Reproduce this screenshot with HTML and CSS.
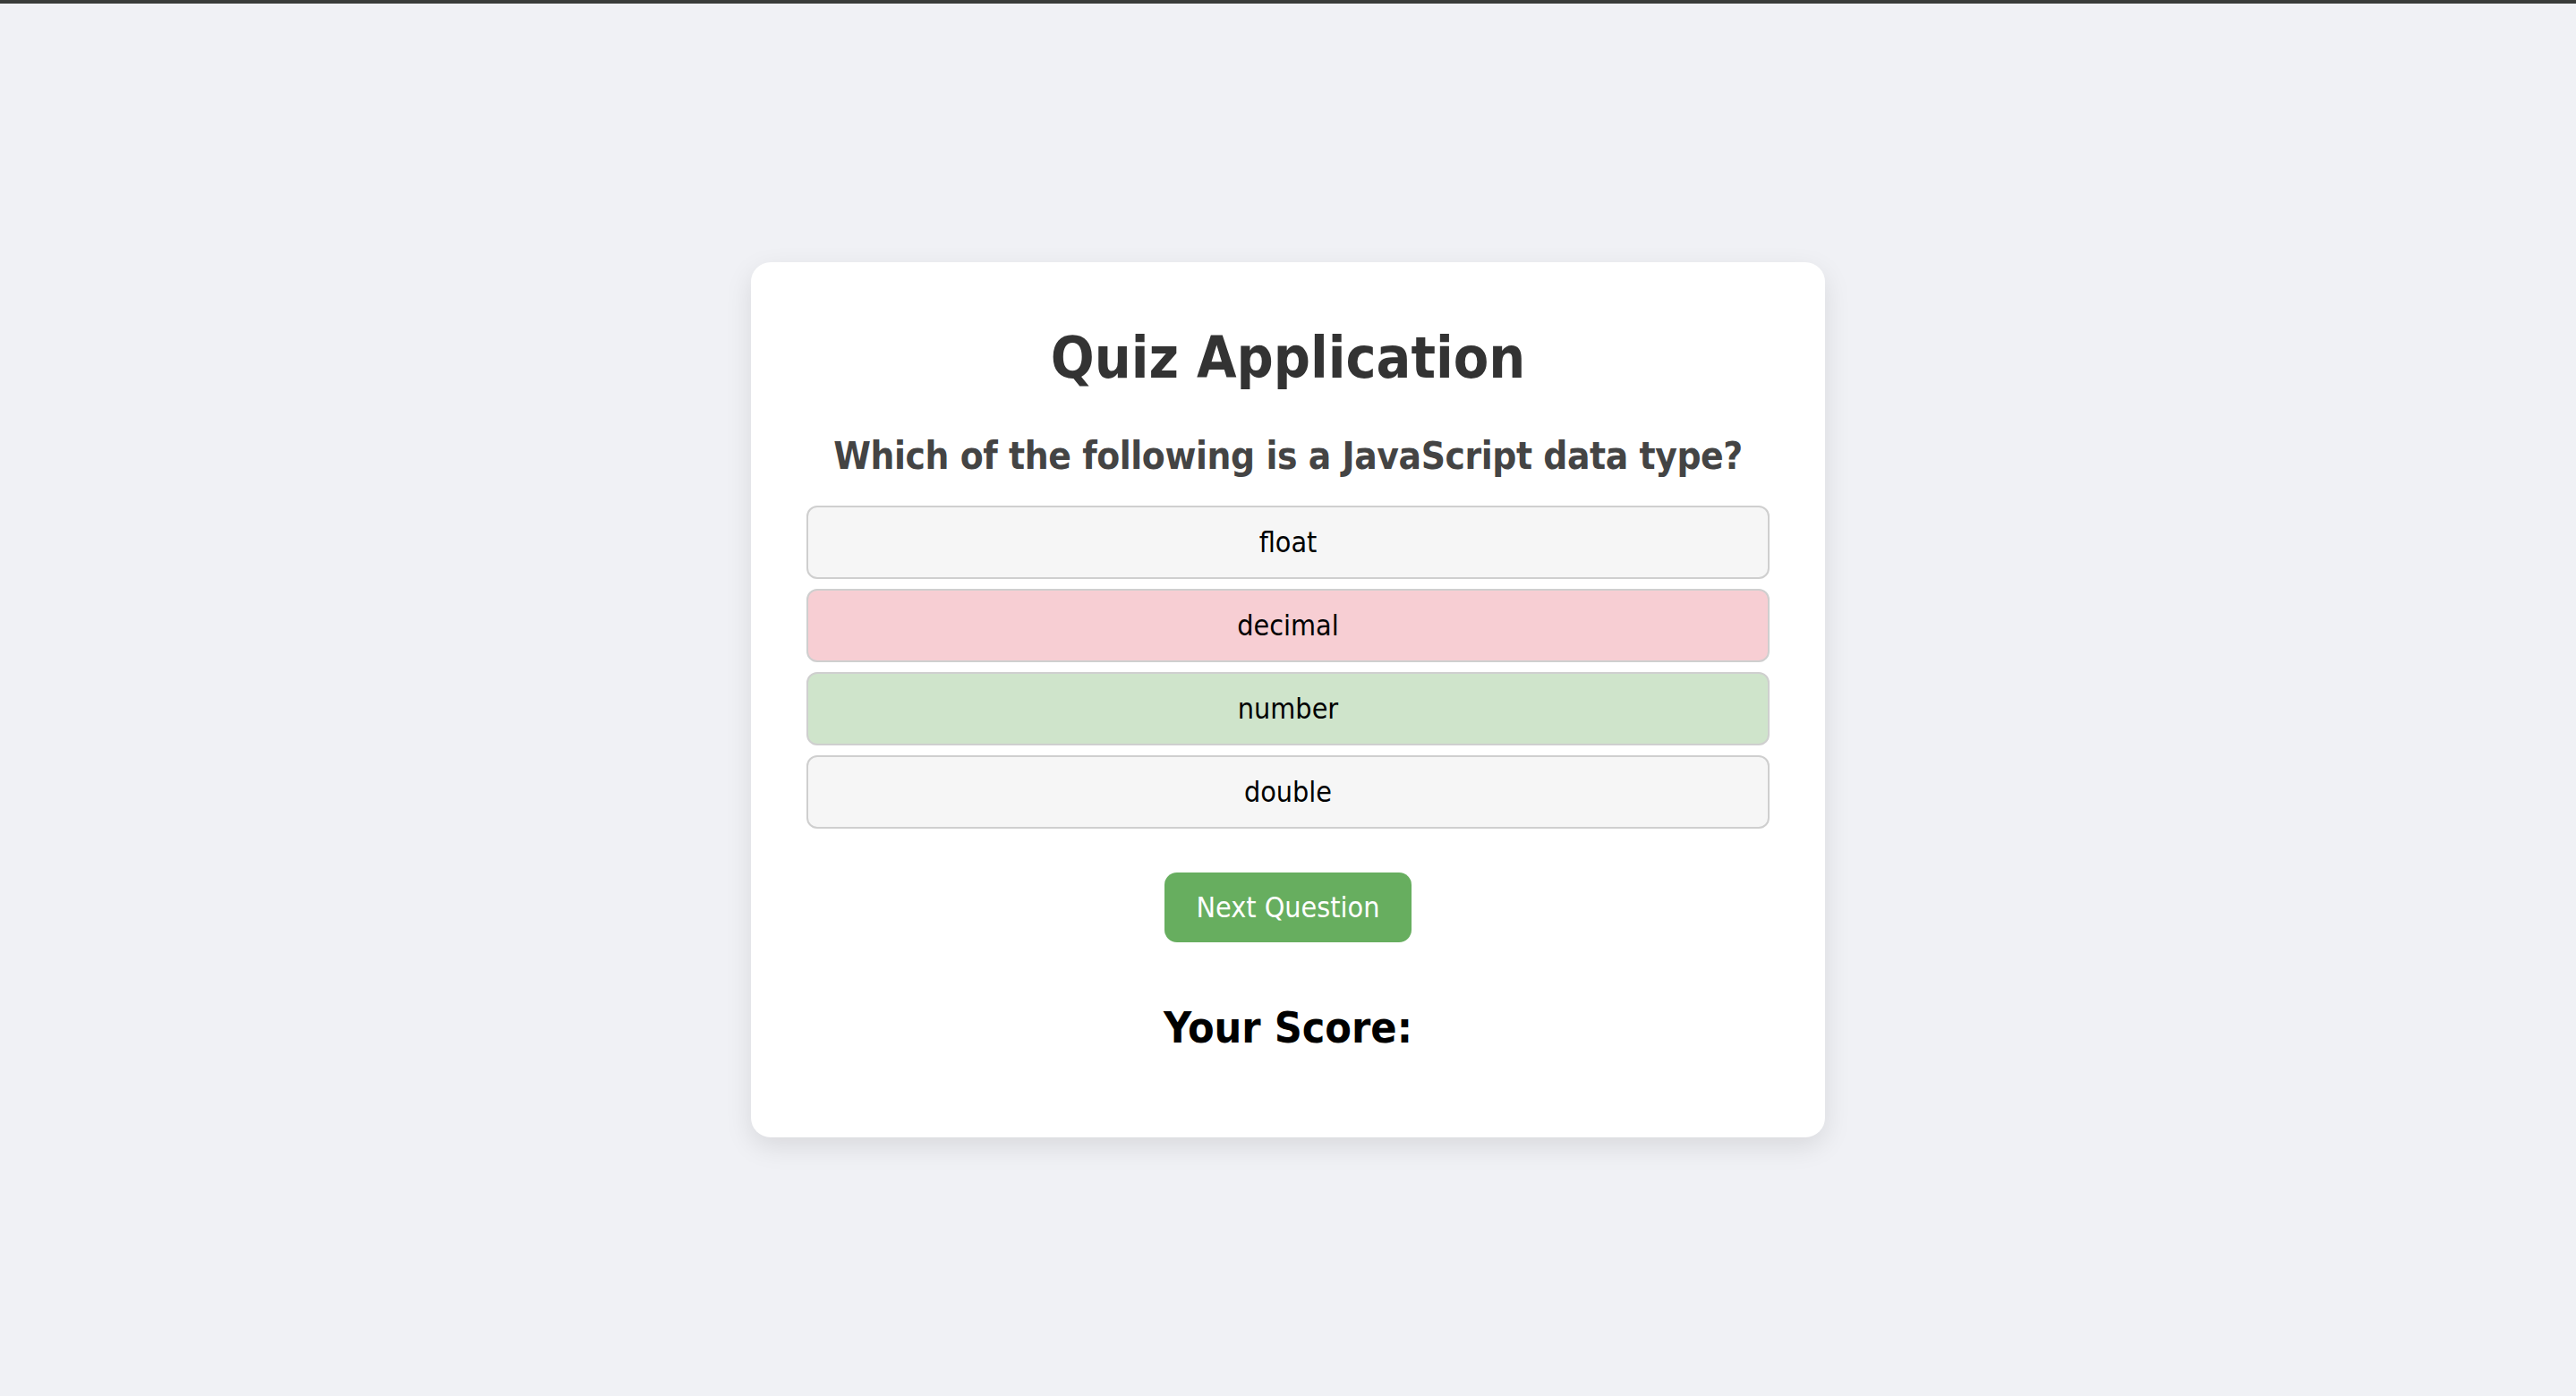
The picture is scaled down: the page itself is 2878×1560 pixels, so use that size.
FILE: index.html
```html
<!DOCTYPE html>
<html lang="en">
<head>
<meta charset="utf-8">
<title>Quiz Application</title>
<link rel="stylesheet" href="styles.css">
</head>
<body>
<div class="card">
  <h1 class="title">Quiz Application</h1>
  <h2 class="question">Which of the following is a JavaScript data type?</h2>
  <div class="options">
    <button class="option">float</button>
    <button class="option wrong">decimal</button>
    <button class="option right">number</button>
    <button class="option">double</button>
  </div>
  <div class="actions">
    <button class="next">Next Question</button>
  </div>
  <h2 class="score">Your Score:</h2>
</div>
</body>
</html>
```
FILE: styles.css
```css
html, body {
  margin: 0;
  padding: 0;
}
body {
  box-sizing: border-box;
  min-height: 100vh;
  border-top: 4px solid #3a3c3a;
  background: #f0f1f5;
  display: flex;
  align-items: center;
  justify-content: center;
  font-family: "DejaVu Sans Condensed", "DejaVu Sans", sans-serif;
  font-stretch: condensed;
}
.card {
  width: 1200px;
  box-sizing: border-box;
  padding: 68px 62px 94px;
  background: #ffffff;
  border-radius: 22px;
  box-shadow: 0 10px 30px rgba(0, 0, 0, 0.1);
  text-align: center;
}
.title {
  margin: 0;
  font-size: 64px;
  line-height: 78px;
  font-weight: bold;
  color: #333333;
}
.question {
  margin: 44px 0 0;
  font-size: 42px;
  letter-spacing: -0.4px;
  line-height: 54px;
  font-weight: bold;
  color: #444444;
  white-space: nowrap;
}
.options {
  margin-top: 28px;
  display: flex;
  flex-direction: column;
  gap: 11px;
}
.option {
  display: block;
  width: 100%;
  box-sizing: border-box;
  padding: 20px;
  border: 2px solid #cfcfcf;
  border-radius: 12px;
  background: #f6f6f6;
  font-family: inherit;
  font-stretch: condensed;
  font-size: 32px;
  line-height: 38px;
  color: #000000;
  text-align: center;
}
.option.wrong {
  background: #f7ced3;
}
.option.right {
  background: #cfe4cb;
}
.actions {
  margin-top: 49px;
  display: flex;
  justify-content: center;
}
.next {
  padding: 20px 36px;
  border: none;
  border-radius: 14px;
  background: #67ae5f;
  color: #ffffff;
  font-family: inherit;
  font-stretch: condensed;
  font-size: 32px;
  line-height: 38px;
}
.score {
  margin: 66px 0 0;
  font-size: 48px;
  line-height: 58px;
  font-weight: bold;
  color: #000000;
}
```
